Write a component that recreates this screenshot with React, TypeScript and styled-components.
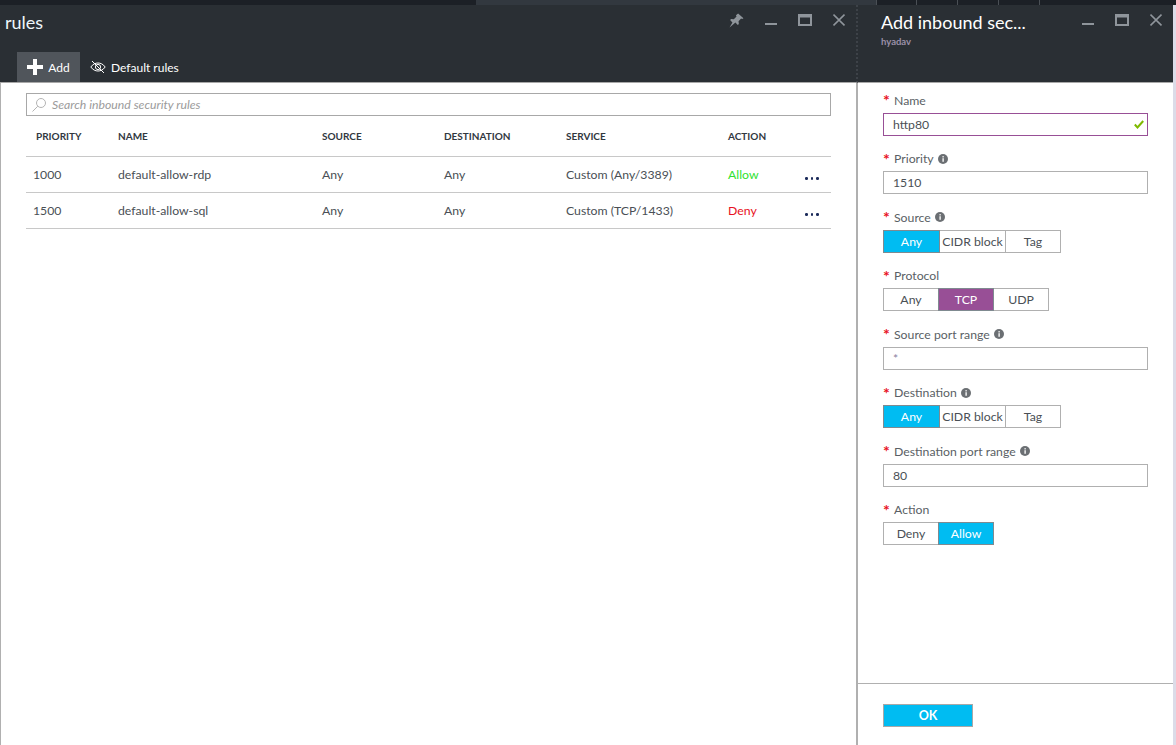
import React from "react";
import styled, { createGlobalStyle } from "styled-components";

const rules = [
  { priority: "1000", name: "default-allow-rdp", service: "Custom (Any/3389)", action: "Allow" },
  { priority: "1500", name: "default-allow-sql", service: "Custom (TCP/1433)", action: "Deny" },
];

function WindowIcons({ pin }: { pin?: boolean }) {
  return (
    <Controls>
      {pin && (
        <svg width="15" height="15" viewBox="0 0 14 14">
          <path d="M8.500.500l5 4.300-1.200.8-1-.5-2.400 2.700.3 2.500-1 1-2.200-2.400L.5 13.500l2.700-4.700-2.200-2.300 1-.9 2.500.3 2.500-2.700-.5-1z" fill="#8f959b" />
        </svg>
      )}
      <svg width="12" height="14" viewBox="0 0 12 14">
        <rect x="0" y="10" width="12" height="2" fill="#8f959b" />
      </svg>
      <svg width="14" height="14" viewBox="0 0 14 14">
        <path d="M0 1h14v12H0zM2 4.500V11h10V4.500z" fill="#8f959b" fillRule="evenodd" />
      </svg>
      <svg width="12" height="14" viewBox="0 0 12 14">
        <path d="M.5 1.500l11 11M11.500 1.500l-11 11" stroke="#8f959b" strokeWidth="1.600" fill="none" />
      </svg>
    </Controls>
  );
}

function Info() {
  return (
    <InfoDot>
      <svg width="10" height="10" viewBox="0 0 9 9">
        <circle cx="4.500" cy="4.500" r="4.500" fill="#6b6f73" />
        <rect x="4" y="3.800" width="1.200" height="3.200" fill="#fff" />
        <rect x="4" y="1.900" width="1.200" height="1.200" fill="#fff" />
      </svg>
    </InfoDot>
  );
}

function Field({ label, info, children }: { label: string; info?: boolean; children: React.ReactNode }) {
  return (
    <FieldRow>
      <FieldLabel>
        <Star>*</Star>
        {label}
        {info && <Info />}
      </FieldLabel>
      {children}
    </FieldRow>
  );
}

function Segments({ items, active, color }: { items: [string, number][]; active: string; color?: string }) {
  return (
    <SegmentRow>
      {items.map(([text, width]) => (
        <Segment key={text} $w={width} $on={text === active ? color || "#00bcf2" : ""}>
          {text}
        </Segment>
      ))}
    </SegmentRow>
  );
}

const sourceOptions: [string, number][] = [["Any", 57], ["CIDR block", 67], ["Tag", 56]];

export default function App() {
  return (
    <Page>
      <Global />
      <TopStrip>
        <StripFill />
        <StripLight />
        <StripCell $w={40} />
        <StripCell $w={41} />
        <StripCell $w={41} />
        <StripCell $w={41} />
        <StripCell $w={137} />
      </TopStrip>
      <Blades>
        <LeftBlade>
          <DarkHead $divider>
            <TitleRow>
              <Title>rules</Title>
              <WindowIcons pin />
            </TitleRow>
            <Toolbar>
              <ToolActive>
                <svg width="16" height="16" viewBox="0 0 16 16">
                  <path d="M6 0h4v6h6v4h-6v6H6v-6H0V6h6z" fill="#fff" />
                </svg>
                Add
              </ToolActive>
              <ToolButton>
                <svg width="16" height="14" viewBox="0 0 16 14" fill="none" stroke="#fff" strokeWidth="1">
                  <path d="M.8 7C3 4 5.500 3 8 3s5 1 7.200 4C13 10 10.500 11 8 11S3 10 .8 7z" />
                  <circle cx="8" cy="7" r="2.600" />
                  <path d="M2 1l12 12" />
                </svg>
                Default rules
              </ToolButton>
            </Toolbar>
          </DarkHead>
          <LeftBody>
            <SearchBox>
              <svg width="14" height="14" viewBox="0 0 14 14" fill="none" stroke="#b4b4b4" strokeWidth="1">
                <circle cx="9" cy="5" r="4.500" />
                <path d="M5.800 8.200L.5 13.500" />
              </svg>
              <SearchHint>Search inbound security rules</SearchHint>
            </SearchBox>
            <RuleTable>
              <thead>
                <tr>
                  <Th $w={92} $pad={10}>PRIORITY</Th>
                  <Th $w={204}>NAME</Th>
                  <Th $w={122}>SOURCE</Th>
                  <Th $w={122}>DESTINATION</Th>
                  <Th $w={162}>SERVICE</Th>
                  <Th $w={75}>ACTION</Th>
                  <Th $w={28} />
                </tr>
              </thead>
              <tbody>
                {rules.map((r) => (
                  <tr key={r.priority}>
                    <Td $pad={7}>{r.priority}</Td>
                    <Td>{r.name}</Td>
                    <Td>Any</Td>
                    <Td>Any</Td>
                    <Td>{r.service}</Td>
                    <Td $color={r.action === "Allow" ? "#2fe22f" : "#e81123"}>{r.action}</Td>
                    <Td>
                      <More>
                        <i />
                        <i />
                        <i />
                      </More>
                    </Td>
                  </tr>
                ))}
              </tbody>
            </RuleTable>
          </LeftBody>
        </LeftBlade>
        <RightBlade>
          <DarkHead>
            <TitleRow>
              <FormTitle>
                Add inbound sec...
                <Owner>hyadav</Owner>
              </FormTitle>
              <WindowIcons />
            </TitleRow>
          </DarkHead>
          <FormBody>
            <Form>
              <Field label="Name">
                <TextBox $focus>
                  http80
                  <CheckMark>
                    <svg width="10" height="9" viewBox="0 0 10 9">
                      <path d="M.8 4.500l2.700 3L9.200 1" fill="none" stroke="#7fba00" strokeWidth="2" />
                    </svg>
                  </CheckMark>
                </TextBox>
              </Field>
              <Field label="Priority" info>
                <TextBox>1510</TextBox>
              </Field>
              <Field label="Source" info>
                <Segments items={sourceOptions} active="Any" />
              </Field>
              <Field label="Protocol">
                <Segments items={[["Any", 56], ["TCP", 56], ["UDP", 56]]} active="TCP" color="#984f96" />
              </Field>
              <Field label="Source port range" info>
                <TextBox $muted>*</TextBox>
              </Field>
              <Field label="Destination" info>
                <Segments items={sourceOptions} active="Any" />
              </Field>
              <Field label="Destination port range" info>
                <TextBox>80</TextBox>
              </Field>
              <Field label="Action">
                <Segments items={[["Deny", 56], ["Allow", 56]]} active="Allow" />
              </Field>
            </Form>
            <Footer>
              <OkButton>OK</OkButton>
            </Footer>
          </FormBody>
        </RightBlade>
      </Blades>
    </Page>
  );
}

const Global = createGlobalStyle`
  html, body { margin: 0; padding: 0; height: 100%; overflow: hidden; }
  body { font-family: Lato, "Open Sans", "Liberation Sans", sans-serif; color: #4a4f55; background: #fff; }
`;

const Page = styled.div`
  width: 1176px;
  height: 745px;
  display: flex;
  flex-direction: column;
  overflow: hidden;
  font-size: 12.25px;
`;

const TopStrip = styled.div`
  height: 5px;
  flex: none;
  display: flex;
  background: #1c2026;
`;

const StripFill = styled.div`
  width: 476px;
`;

const StripLight = styled.div`
  width: 400px;
  background: #32383f;
`;

const StripCell = styled.div<{ $w: number }>`
  width: ${(p) => p.$w}px;
  border-left: 1px solid #4a4f55;
  box-sizing: border-box;
`;

const Blades = styled.div`
  flex: 1;
  display: flex;
  min-height: 0;
`;

const LeftBlade = styled.section`
  width: 858px;
  flex: none;
  display: flex;
  flex-direction: column;
`;

const RightBlade = styled.section`
  flex: 1;
  display: flex;
  flex-direction: column;
  border-right: 3px solid #dcdce8;
  min-width: 0;
`;

const DarkHead = styled.header<{ $divider?: boolean }>`
  height: 78px;
  flex: none;
  box-sizing: border-box;
  background: #2a2f34;
  border-bottom: 1px solid #a8a8a8;
  border-right: ${(p) => (p.$divider ? "2px dotted #3d4248" : "0")};
  display: flex;
  flex-direction: column;
`;

const TitleRow = styled.div`
  display: flex;
  justify-content: space-between;
  align-items: flex-start;
  padding-top: 7px;
`;

const Title = styled.h1`
  margin: 0 0 0 5px;
  font-size: 18px;
  line-height: 20px;
  font-weight: 400;
  color: #eef6fb;
`;

const FormTitle = styled.h2`
  margin: 0 0 0 23px;
  font-size: 18px;
  line-height: 20px;
  font-weight: 400;
  color: #fff;
`;

const Owner = styled.div`
  font-size: 9.5px;
  line-height: 12px;
  font-weight: 700;
  margin-top: 4px;
  color: #9a8fa8;
`;

const Controls = styled.div`
  display: flex;
  align-items: center;
  gap: 21px;
  padding-right: 11px;
  height: 16px;
`;

const Toolbar = styled.div`
  margin-top: 20px;
  padding-left: 17px;
  display: flex;
  height: 30px;
`;

const ToolButton = styled.button`
  border: 0;
  background: transparent;
  color: #fff;
  font: 400 12px Lato, sans-serif;
  display: flex;
  align-items: center;
  gap: 5px;
  padding: 0 10px;
`;

const ToolActive = styled(ToolButton)`
  background: #50555b;
  width: 63px;
  justify-content: center;
  padding: 0;
`;

const LeftBody = styled.div`
  flex: 1;
  padding: 10px 25px 0 25px;
  border-left: 1px solid #b0b0b0;
  border-right: 2px solid #b0b0b0;
`;

const SearchBox = styled.div`
  height: 23px;
  box-sizing: border-box;
  border: 1px solid #a8a8a8;
  display: flex;
  align-items: center;
  gap: 6px;
  padding-left: 5px;
`;

const SearchHint = styled.span`
  font-style: italic;
  color: #9b9b9b;
`;

const RuleTable = styled.table`
  width: 100%;
  border-collapse: collapse;
  table-layout: fixed;
  tr {
    border-bottom: 1px solid #c8c8c8;
  }
`;

const Th = styled.th<{ $w?: number; $pad?: number }>`
  box-sizing: border-box;
  width: ${(p) => p.$w}px;
  height: 40px;
  padding: 0 0 0 ${(p) => p.$pad || 0}px;
  text-align: left;
  font-size: 10px;
  font-weight: 700;
  color: #32383f;
`;

const Td = styled.td<{ $pad?: number; $color?: string }>`
  height: 35px;
  padding: 0 0 0 ${(p) => p.$pad || 0}px;
  color: ${(p) => p.$color || "#4a4f55"};
`;

const More = styled.div`
  display: flex;
  gap: 3px;
  margin: 9px 0 0 2px;
  i {
    width: 2.500px;
    height: 2.500px;
    border-radius: 50%;
    background: #1c2b5a;
  }
`;

const FormBody = styled.div`
  flex: 1;
  display: flex;
  flex-direction: column;
  min-height: 0;
`;

const Form = styled.div`
  flex: 1;
  padding: 6.900px 25px 0 25px;
  display: flex;
  flex-direction: column;
  gap: 12.500px;
`;

const FieldRow = styled.div`
  display: flex;
  flex-direction: column;
`;

const FieldLabel = styled.label`
  height: 23px;
  box-sizing: border-box;
  padding-bottom: 2px;
  display: flex;
  align-items: center;
  color: #5a5f65;
`;

const Star = styled.span`
  color: #e81123;
  width: 11px;
  font-size: 16px;
  line-height: 14px;
  font-weight: 700;
`;

const InfoDot = styled.span`
  margin-left: 4px;
  display: inline-flex;
`;

const TextBox = styled.div<{ $focus?: boolean; $muted?: boolean }>`
  position: relative;
  height: 23px;
  box-sizing: border-box;
  border: 1px solid ${(p) => (p.$focus ? "#984f96" : "#b0b0b0")};
  padding-left: 9px;
  line-height: 21px;
  color: ${(p) => (p.$muted ? "#8a80a0" : "#4a4f55")};
`;

const CheckMark = styled.span`
  position: absolute;
  right: 3px;
  top: 6px;
  display: flex;
`;

const SegmentRow = styled.div`
  display: flex;
`;

const Segment = styled.div<{ $w: number; $on: string }>`
  width: ${(p) => p.$w}px;
  height: 23px;
  box-sizing: border-box;
  border: 1px solid ${(p) => (p.$on ? "#7f8a90" : "#b0b0b0")};
  margin-right: -1px;
  background: ${(p) => p.$on || "#fff"};
  color: ${(p) => (p.$on ? "#fff" : "#4a4f55")};
  text-align: center;
  line-height: 21px;
  position: relative;
  z-index: ${(p) => (p.$on ? 1 : 0)};
`;

const Footer = styled.footer`
  height: 62px;
  flex: none;
  box-sizing: border-box;
  border-top: 1px solid #b0b0b0;
  padding: 20px 0 0 25px;
`;

const OkButton = styled.button`
  width: 90px;
  height: 23px;
  border: 1px solid #a8a8a8;
  background: #00bcf2;
  color: #fff;
  font: 700 12.5px Lato, sans-serif;
  padding: 0;
`;
